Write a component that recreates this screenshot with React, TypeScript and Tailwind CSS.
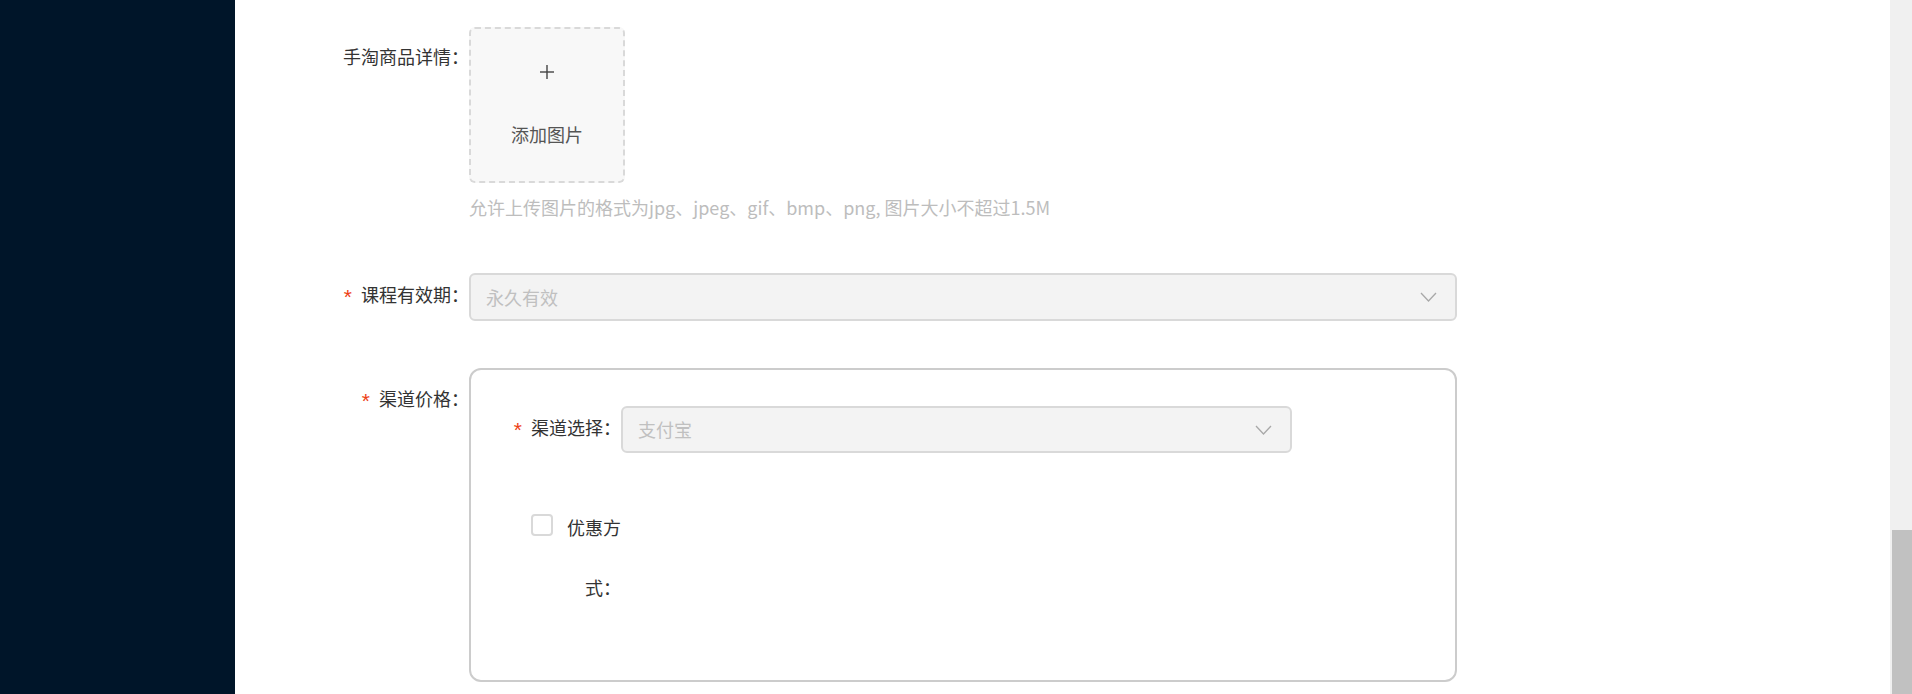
import { ReactNode } from "react";

function Chevron() {
    return (
        <svg width="17" height="10" viewBox="0 0 17 10" fill="none" className="shrink-0">
            <polyline points="1,1 8.5,9 16,1" stroke="#a8a8a8" strokeWidth="1.3" fill="none" />
        </svg>
    );
}

function Label({ children, required, className = "" }: { children: ReactNode; required?: boolean; className?: string }) {
    return (
        <div className={`shrink-0 text-right text-[#333] ${className}`}>
            {required && (
                <span className="relative top-[3px] mr-[7px] font-['Liberation_Mono',monospace] text-[21px] text-[#ed4014]">*</span>
            )}
            {children}
        </div>
    );
}

function Select({ value, width, height }: { value: string; width: string; height: string }) {
    return (
        <div className={`flex items-center justify-between rounded-[6px] border-2 border-[#d9d9d9] bg-[#f3f3f3] pl-[15px] pr-[18px] ${width} ${height}`}>
            <span className="text-[#c0c0c0]">{value}</span>
            <Chevron />
        </div>
    );
}

export default function App() {
    return (
        <div className="flex h-[694px] w-full overflow-hidden bg-white font-['Noto_Sans_CJK_SC',sans-serif] text-[18px]">
            <aside className="w-[235px] shrink-0 bg-[#001529]" />

            <main className="flex-1 pt-[27px]">
                {/* 商品详情 */}
                <div className="flex">
                    <Label className="w-[234px] pt-[16px] leading-[27px]">手淘商品详情：</Label>
                    <div className="flex flex-col">
                        <div className="flex h-[156px] w-[156px] flex-col items-center rounded-[6px] border-2 border-dashed border-[#d9d9d9] bg-[#f8f8f8]">
                            <svg width="16" height="16" viewBox="0 0 16 16" className="mt-[35px]">
                                <line x1="8" y1="1" x2="8" y2="15" stroke="#444" strokeWidth="1.4" />
                                <line x1="1" y1="8" x2="15" y2="8" stroke="#444" strokeWidth="1.4" />
                            </svg>
                            <span className="mt-[41px] leading-[27px] text-[#555]">添加图片</span>
                        </div>
                        <p className="mt-[11px] leading-[27px] text-[#bdbdbd]">
                            允许上传图片的格式为jpg、jpeg、gif、bmp、png, 图片大小不超过1.5M
                        </p>
                    </div>
                </div>

                {/* 有效期 */}
                <div className="mt-[52px] flex items-center">
                    <Label required className="w-[234px]">课程有效期：</Label>
                    <Select value="永久有效" width="w-[988px]" height="h-[48px]" />
                </div>

                {/* 渠道价格 */}
                <div className="mt-[47px] flex">
                    <Label required className="w-[234px] pt-[17px] leading-[27px]">渠道价格：</Label>
                    <div className="w-[988px] rounded-[12px] border-2 border-[#cccccc] pb-[63px] pt-[36px]">
                        <div className="flex items-center">
                            <Label required className="w-[150px]">渠道选择：</Label>
                            <Select value="支付宝" width="w-[671px]" height="h-[47px]" />
                        </div>
                        <div className="mt-[44px] flex items-start pl-[60px]">
                            <div className="mt-[17px] h-[22px] w-[22px] shrink-0 rounded-[4px] border-2 border-[#d9d9d9] bg-white" />
                            <div className="ml-[12px] w-[56px] text-right leading-[60px] text-[#333]">优惠方式：</div>
                        </div>
                    </div>
                </div>
            </main>

            <div className="flex w-[22px] shrink-0 flex-col justify-end bg-[#f0f0f0]">
                <div className="ml-[2px] h-[164px] bg-[#c1c1c1]" />
            </div>
        </div>
    );
}
